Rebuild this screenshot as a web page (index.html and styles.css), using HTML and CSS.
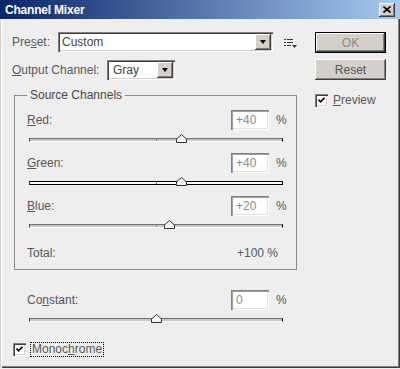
FILE: index.html
```html
<!DOCTYPE html>
<html>
<head>
<meta charset="utf-8">
<link rel="stylesheet" href="styles.css">
</head>
<body>
<div class="window">
  <div class="titlebar">
    <span class="title">Channel Mixer</span>
    <span class="close"><svg width="8" height="7" viewBox="0 0 8 7"><path d="M0.5 0.5 L7.5 6.5 M7.5 0.5 L0.5 6.5" stroke="#000" stroke-width="1.6" fill="none"/></svg></span>
  </div>
  <div class="frame">
    <div class="left">
      <div class="row">
        <span class="lbl preset-lbl">Pre<u>s</u>et:</span>
        <div class="select preset-sel"><span class="sel-text">Custom</span><span class="sel-btn"><span class="tri"></span></span></div>
        <svg class="menu-icon" width="13" height="9" viewBox="0 0 13 9"><g fill="#3a3a3a"><rect x="0" y="0" width="2" height="1"/><rect x="3" y="0" width="6" height="1"/><rect x="0" y="3" width="2" height="1"/><rect x="3" y="3" width="6" height="1"/><rect x="0" y="6" width="2" height="1"/><rect x="3" y="6" width="4" height="1"/><path d="M8 6 L13 6 L10.5 9 Z"/></g></svg>
      </div>
      <div class="row row2">
        <span class="lbl output-lbl"><u>O</u>utput Channel:</span>
        <div class="select output-sel"><span class="sel-text">Gray</span><span class="sel-btn"><span class="tri"></span></span></div>
      </div>
      <fieldset class="group">
        <legend>Source Channels</legend>
        <div class="channel">
          <div class="ch-row"><span class="ch-lbl"><u>R</u>ed:</span><span class="num">+40</span><span class="pct">%</span></div>
          <div class="slider"><div class="track"><span class="tick"></span></div><svg class="thumb" style="left:60%" width="11" height="9" viewBox="0 0 11 9"><path d="M5.5 0.5 L10.5 5 L10.5 8.5 L0.5 8.5 L0.5 5 Z" fill="#f4f4f4" stroke="#333"/></svg></div>
        </div>
        <div class="channel">
          <div class="ch-row"><span class="ch-lbl"><u>G</u>reen:</span><span class="num">+40</span><span class="pct">%</span></div>
          <div class="slider"><div class="track focus"><span class="tick"></span></div><svg class="thumb" style="left:60%" width="11" height="9" viewBox="0 0 11 9"><path d="M5.5 0.5 L10.5 5 L10.5 8.5 L0.5 8.5 L0.5 5 Z" fill="#f4f4f4" stroke="#333"/></svg></div>
        </div>
        <div class="channel">
          <div class="ch-row"><span class="ch-lbl"><u>B</u>lue:</span><span class="num">+20</span><span class="pct">%</span></div>
          <div class="slider"><div class="track"><span class="tick"></span></div><svg class="thumb" style="left:55%" width="11" height="9" viewBox="0 0 11 9"><path d="M5.5 0.5 L10.5 5 L10.5 8.5 L0.5 8.5 L0.5 5 Z" fill="#f4f4f4" stroke="#333"/></svg></div>
        </div>
        <div class="total-row"><span class="ch-lbl">Total:</span><span class="total-val">+100 %</span></div>
      </fieldset>
      <div class="constant">
        <div class="ch-row"><span class="ch-lbl">Co<u>n</u>stant:</span><span class="num">0</span><span class="pct">%</span></div>
        <div class="slider"><div class="track"><span class="tick"></span></div><svg class="thumb" style="left:50%" width="11" height="9" viewBox="0 0 11 9"><path d="M5.5 0.5 L10.5 5 L10.5 8.5 L0.5 8.5 L0.5 5 Z" fill="#f4f4f4" stroke="#333"/></svg></div>
      </div>
      <div class="mono">
        <span class="check"><svg width="7" height="7" viewBox="0 0 7 7"><path d="M0.5 2.5 L2.5 4.8 L6.5 0.8" stroke="#000" stroke-width="1.7" fill="none"/></svg></span>
        <span class="mono-lbl">Monoc<u>h</u>rome</span>
      </div>
    </div>
    <div class="right">
      <div class="btn default">OK</div>
      <div class="btn reset">Reset</div>
      <div class="preview">
        <span class="check"><svg width="7" height="7" viewBox="0 0 7 7"><path d="M0.5 2.5 L2.5 4.8 L6.5 0.8" stroke="#000" stroke-width="1.7" fill="none"/></svg></span>
        <span class="preview-lbl"><u>P</u>review</span>
      </div>
    </div>
  </div>
</div>
</body>
</html>
```
FILE: styles.css
```css
* { box-sizing: border-box; }
html, body { margin: 0; padding: 0; }
body {
  width: 400px;
  height: 369px;
  overflow: hidden;
  background: #eeeeee;
  font-family: "Liberation Sans", Arial, sans-serif;
  font-size: 12px;
  color: #585858;
}
u { text-decoration: underline; text-underline-offset: 1px; }
.window {
  width: 400px;
  height: 369px;
  display: flex;
  flex-direction: column;
}
.titlebar {
  height: 19px;
  flex: none;
  display: flex;
  align-items: center;
  justify-content: space-between;
  padding-left: 5px;
  background: linear-gradient(to right, #0a246a, #a6caf0);
}
.title {
  color: #fff;
  font-weight: bold;
  font-size: 12px;
  letter-spacing: -0.2px;
}
.close {
  width: 16px;
  height: 14px;
  margin-right: 5px;
  background: #d4d0c8;
  display: flex;
  align-items: center;
  justify-content: center;
  box-shadow: inset -1px -1px #404040, inset 1px 1px #fff, inset -2px -2px #808080;
}
.frame {
  flex: 1;
  display: flex;
  padding: 13px 0 0 12px;
  box-shadow: inset 1px 0 #d4d0c8, inset 2px 0 #fff, inset -1px -1px #404040, inset -2px -2px #808080;
  margin-bottom: 1px;
}
.left { width: 290px; flex: none; }
.right { width: 71px; margin-left: 13px; flex: none; }
.row { display: flex; align-items: center; height: 20px; }
.row2 { margin-top: 8px; }
.preset-lbl { width: 46px; }
.output-lbl { width: 95px; }
.select {
  height: 20px;
  background: #fff;
  display: flex;
  align-items: center;
  justify-content: space-between;
  padding: 2px;
  box-shadow: inset 1px 1px #808080, inset 2px 2px #404040, inset -1px -1px #fff, inset -2px -2px #d4d0c8;
  color: #444;
}
.preset-sel { width: 215px; }
.output-sel { width: 68px; }
.sel-text { padding-left: 2px; }
.output-sel .sel-text { padding-left: 4px; }
.sel-btn {
  width: 16px;
  height: 16px;
  background: #d4d0c8;
  display: flex;
  align-items: center;
  justify-content: center;
  box-shadow: inset -1px -1px #404040, inset 1px 1px #fff, inset -2px -2px #808080;
}
.tri {
  width: 0; height: 0;
  border-left: 3.5px solid transparent;
  border-right: 3.5px solid transparent;
  border-top: 4px solid #000;
}
.menu-icon { margin-left: 11px; margin-top: 2px; }
.group {
  margin: 8px 0 0 2px;
  width: 283px;
  border: 1px solid #8c8c8c;
  padding: 8px 8px 6px 12px;
  min-width: 0;
}
.group legend {
  padding: 0 3px;
  line-height: 14px;
  color: #484848;
}
.channel { height: 39px; }
.channel + .channel { margin-top: 4px; }
.ch-row { display: flex; align-items: center; height: 20px; }
.ch-lbl { flex: 1; }
.num {
  width: 38px;
  height: 20px;
  background: #fff;
  color: #8a8a8a;
  padding: 3px 0 0 5px;
  line-height: 14px;
  box-shadow: inset 1px 1px #808080, inset 2px 2px #a0a0a0, inset -1px -1px #fff, inset -2px -2px #e4e2dc;
}
.pct { width: 19px; padding-left: 7px; }
.slider {
  position: relative;
  width: 254px;
  height: 19px;
  margin-left: 2px;
  padding-top: 8px;
}
.track {
  position: relative;
  height: 4px;
  background: #c8c8c8;
  border-top: 1px solid #707070;
  border-bottom: 1px solid #fafafa;
  border-left: 1px solid #404040;
  border-right: 1px solid #000;
}
.track.focus {
  background: #fff;
  border-top-color: #000;
  border-bottom-color: #000;
}
.tick {
  position: absolute;
  left: 50%;
  top: 0;
  width: 1px;
  height: 2px;
  background: #888;
}
.thumb {
  position: absolute;
  top: 4px;
  margin-left: -5px;
  display: block;
}
.total-row {
  display: flex;
  align-items: center;
  height: 20px;
  margin-top: 8px;
}
.total-val { margin-right: 10px; }
.constant {
  width: 261px;
  margin: 20px 0 0 15px;
  height: 39px;
}
.mono {
  display: flex;
  align-items: center;
  margin: 13px 0 0 1px;
}
.check {
  width: 13px;
  height: 13px;
  background: #fff;
  display: flex;
  align-items: center;
  justify-content: center;
  box-shadow: inset 1px 1px #808080, inset 2px 2px #404040, inset -1px -1px #fff, inset -2px -2px #d4d0c8;
}
.mono-lbl {
  margin-left: 4px;
  border: 1px dotted #000;
  padding: 0 1px;
  line-height: 13px;
}
.btn {
  width: 71px;
  height: 21px;
  background: #d4d0c8;
  display: flex;
  align-items: center;
  justify-content: center;
}
.btn.default {
  color: #8a8a8a;
  border: 1px solid #000;
  box-shadow: inset -1px -1px #404040, inset 1px 1px #fff, inset -2px -2px #808080;
}
.btn.reset {
  margin-top: 6px;
  color: #555;
  box-shadow: inset -1px -1px #404040, inset 1px 1px #fff, inset -2px -2px #808080;
}
.preview {
  display: flex;
  align-items: center;
  margin-top: 13px;
}
.preview-lbl { margin-left: 5px; }
```
